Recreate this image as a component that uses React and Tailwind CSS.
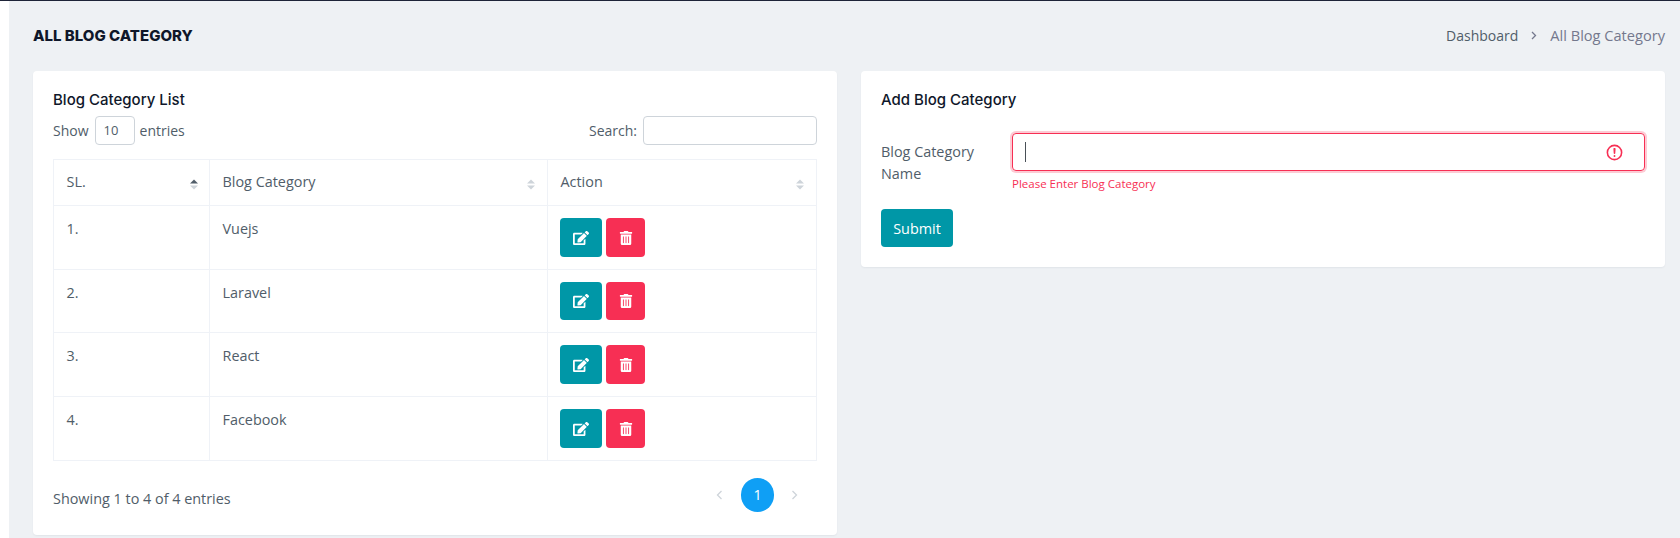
import React from 'react';
import { FaEdit, FaTrashAlt } from 'react-icons/fa';

const rows = [
    { sl: '1.', name: 'Vuejs', rowClass: 'h-[64px]', btnClass: 'h-[39px]' },
    { sl: '2.', name: 'Laravel', rowClass: 'h-[63px]', btnClass: 'h-[38px]' },
    { sl: '3.', name: 'React', rowClass: 'h-[64px]', btnClass: 'h-[39px]' },
    { sl: '4.', name: 'Facebook', rowClass: 'h-[64px]', btnClass: 'h-[39px]' },
];

const SortIcon = ({ active }) => (
    <svg width="8" height="11" viewBox="0 0 8 11" className="shrink-0">
        <path d="M4 0.5 L8 4.5 H0 Z" fill={active ? '#505d69' : '#ced4da'} />
        <path d="M4 10.5 L8 6.5 H0 Z" fill="#ced4da" />
    </svg>
);

const HeadCell = ({ label, active, className }) => (
    <th className={`border border-[#eff2f7] pl-[12.5px] pr-3 font-semibold text-left ${className}`}>
        <div className="flex items-center justify-between">
            <span className="mt-[-2px] font-medium">{label}</span>
            <span className={`mt-[4px] flex ${active ? 'mr-[-1px]' : ''}`}><SortIcon active={active} /></span>
        </div>
    </th>
);

const Chevron = ({ left }) => (
    <svg width="7" height="10" viewBox="0 0 7 10" fill="none" stroke="#ced4da" strokeWidth="1.3">
        <path d={left ? 'M5.5 1 L1.5 5 L5.5 9' : 'M1.5 1 L5.5 5 L1.5 9'} />
    </svg>
);

export default function App() {
    return (
        <div className="h-[538px] overflow-hidden bg-white text-[14.4px] text-[#505d69] font-['Open_Sans','Noto_Sans',sans-serif]">
            <div className="h-px bg-[#1e2438]" />
            <div className="ml-[9px] h-[537px] bg-[#eef1f4] pl-6 pr-[15px]">
                {/* page title */}
                <div className="flex h-[70px] items-center justify-between">
                    <h1 className="font-['Inter',sans-serif] text-[15px] font-extrabold text-[#0f172a]">ALL BLOG CATEGORY</h1>
                    <div className="flex items-center">
                        <span className="text-[14px]">Dashboard</span>
                        <svg width="6" height="9" viewBox="0 0 6 9" fill="none" stroke="#74788d" strokeWidth="1.3" className="mx-[13px]">
                            <path d="M1 1 L4.5 4.5 L1 8" />
                        </svg>
                        <span className="text-[14.6px] text-[#74788d]">All Blog Category</span>
                    </div>
                </div>

                <div className="grid grid-cols-2 gap-6">
                    {/* list card */}
                    <div className="h-[464px] rounded bg-white px-5 pt-[19px] shadow-[0_1px_2px_rgba(18,38,63,0.06)]">
                        <h4 className="font-['Inter',sans-serif] text-[15px] leading-5 font-medium text-[#0f172a]">Blog Category List</h4>
                        <div className="mt-[6px] flex h-[29px] items-center justify-between text-[14px]">
                            <div className="flex items-center">
                                <span>Show</span>
                                <div className="mx-[5px] ml-[6px] flex h-[29px] w-[40px] items-center rounded border border-[#ced4da] pl-[8px] text-[13px]">10</div>
                                <span>entries</span>
                            </div>
                            <div className="flex items-center">
                                <span>Search:</span>
                                <input className="ml-[6px] h-[29px] w-[174px] rounded border border-[#ced4da] outline-none" />
                            </div>
                        </div>
                        <table className="mt-[14px] w-[764px] table-fixed border-collapse">
                            <thead>
                                <tr className="h-[46px]">
                                    <HeadCell label="SL." active className="w-[156px]" />
                                    <HeadCell label="Blog Category" className="w-[338px]" />
                                    <HeadCell label="Action" />
                                </tr>
                            </thead>
                            <tbody>
                                {rows.map(row => (
                                    <tr key={row.sl} className={row.rowClass}>
                                        <td className="border border-[#eff2f7] pl-[12.5px] pr-3 pt-3 pb-3 align-top leading-[22px]">{row.sl}</td>
                                        <td className="border border-[#eff2f7] pl-[12.5px] pr-3 pt-3 pb-3 align-top leading-[22px]">{row.name}</td>
                                        <td className="border border-[#eff2f7] px-3 pt-3 pb-[11px] align-top">
                                            <div className="flex gap-1">
                                                <button className={`flex w-[42px] items-center justify-center rounded bg-[#0097a7] text-white ${row.btnClass}`}><FaEdit size={16} /></button>
                                                <button className={`flex w-[39px] items-center justify-center rounded bg-[#f72f54] text-white ${row.btnClass}`}><FaTrashAlt size={14} /></button>
                                            </div>
                                        </td>
                                    </tr>
                                ))}
                            </tbody>
                        </table>
                        <div className="mt-[17px] flex h-[34px] items-center justify-between">
                            <span className="pt-[7px]">Showing 1 to 4 of 4 entries</span>
                            <div className="mr-[19px] flex items-center">
                                <Chevron left />
                                <span className="mr-[17px] ml-[18px] flex h-[34px] w-[33px] items-center justify-center rounded-full bg-[#0f9ff5] text-white">1</span>
                                <Chevron />
                            </div>
                        </div>
                    </div>

                    {/* form card */}
                    <div className="h-[196px] rounded bg-white px-5 pt-[19px] shadow-[0_1px_2px_rgba(18,38,63,0.06)]">
                        <h4 className="font-['Inter',sans-serif] text-[15px] leading-5 font-medium text-[#0f172a]">Add Blog Category</h4>
                        <div className="mt-[23px] flex">
                            <label className="w-[131px] pt-[8px] leading-[22px]">Blog Category<br />Name</label>
                            <div className="flex-1">
                                <div className="relative h-[38px] rounded border border-[#f72f54] shadow-[0_0_0_2px_rgba(247,47,84,0.25)]">
                                    <div className="absolute top-[8px] left-[12px] h-[20px] w-px bg-[#495057]" />
                                    <svg width="19" height="19" viewBox="0 0 12 12" fill="none" stroke="#f72f54" className="absolute top-[9px] right-[20px]">
                                        <circle cx="6" cy="6" r="4.5" />
                                        <path strokeLinejoin="round" d="M5.8 3.6h.4L6 6.5z" />
                                        <circle cx="6" cy="8.2" r=".6" fill="#f72f54" stroke="none" />
                                    </svg>
                                </div>
                                <div className="mt-[5px] text-[11.5px] leading-[16px] text-[#f72f54]">Please Enter Blog Category</div>
                            </div>
                        </div>
                        <button className="mt-[17px] h-[38px] w-[72px] rounded bg-[#0097a7] pt-px text-white">Submit</button>
                    </div>
                </div>
            </div>
        </div>
    );
}
